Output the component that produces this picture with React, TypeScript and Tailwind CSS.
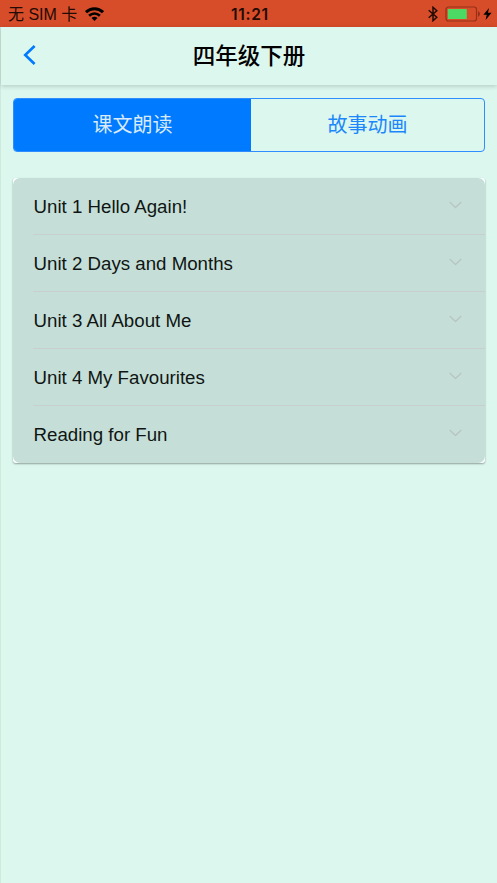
const units = [
  "Unit 1 Hello Again!",
  "Unit 2 Days and Months",
  "Unit 3 All About Me",
  "Unit 4 My Favourites",
  "Reading for Fun",
];

function StatusBar() {
  return (
    <div className="grid h-[27px] grid-cols-3 items-center bg-[#d84d29] pr-[5px] pl-[8px] text-[#220b05]">
      <div className="flex items-center">
        <span className="pt-px text-[16px] leading-[27px] whitespace-nowrap">无 SIM 卡</span>
        <svg className="ml-[8px] h-[14px] w-[19px] text-black" viewBox="0 0 19 14" fill="none">
          <path d="M1 5.2C5.8.6 13.2.6 18 5.2" stroke="currentColor" strokeWidth="3" />
          <path d="M4.1 8.7c3.1-3 7.7-3 10.8 0" stroke="currentColor" strokeWidth="2.6" />
          <path d="M6.5 10.9c1.7-1.6 4.3-1.6 6 0l-3 3z" fill="currentColor" />
        </svg>
      </div>
      <span className="pt-px text-center font-['Inter','Liberation_Sans',sans-serif] text-[15.5px] leading-[27px] font-semibold tracking-[0.7px]">
        11:21
      </span>
      <div className="flex items-center justify-end">
        <svg className="h-[16px] w-[10px]" viewBox="0 0 10 16" fill="none" stroke="currentColor" strokeWidth="1.5">
          <path d="M.7 4.2 8.8 11.3 5 14.7V1.3l3.8 3.4-8.1 7.1" />
        </svg>
        <svg className="ml-[7px] h-[16px] w-[36px]" viewBox="0 0 36 16" fill="none">
          <rect x="1" y="1" width="30.5" height="14" rx="2.5" stroke="#94301a" strokeWidth="1.2" />
          <rect x="2.8" y="3" width="19" height="10" rx="0.5" fill="#4cd964" />
          <path d="M33 5.3c2.6.9 2.6 4.5 0 5.4z" fill="#94301a" />
        </svg>
        <svg className="ml-[2px] h-[12px] w-[9px]" viewBox="0 0 9 12" fill="#000">
          <path d="M6 0 .4 6.8h3.3L2.6 12l6-7.2H5z" />
        </svg>
      </div>
    </div>
  );
}

export default function App() {
  return (
    <div className="flex min-h-screen flex-col border-l border-[#cfe9df] bg-[#dcf7ed] font-['Liberation_Sans','Noto_Sans_CJK_SC',sans-serif] text-[#101513]">
      <div className="-ml-px">
        <StatusBar />
      </div>

      {/* Title bar */}
      <header className="grid h-[58px] grid-cols-[60px_1fr_60px] items-center shadow-[0_1px_5px_rgba(0,0,0,0.2)]">
        <button aria-label="Back" className="pl-[22px] text-[#007aff]">
          <svg className="mb-[2px] h-[20px] w-[13px]" viewBox="0 0 13 20" fill="none" stroke="currentColor" strokeWidth="2.6">
            <path d="M11.6 1 2.2 10l9.4 9" />
          </svg>
        </button>
        <h1 className="pt-[2px] text-center text-[22.5px] leading-[56px] font-medium text-black">四年级下册</h1>
      </header>

      {/* Segmented control */}
      <div className="mx-[12px] mt-[13px] grid h-[54px] grid-cols-[237px_1fr] overflow-hidden rounded-[4px] border-[1.5px] border-[#2f8dff] text-[20px] leading-[51px]">
        <button className="bg-[#007aff] text-[#d9eafb]">课文朗读</button>
        <button className="text-[#1b87fb]">故事动画</button>
      </div>

      {/* Unit list */}
      <div className="mx-[12px] mt-[26px] rounded-[3px] bg-white shadow-[0_1px_2px_rgba(0,0,0,0.35)]">
        <ul className="rounded-[7px] bg-[#c5dfd8] pl-[20px]">
          {units.map((unit) => (
            <li
              key={unit}
              className="flex h-[57px] items-center justify-between border-b border-[#c8d0cd] pr-[23px] text-[18.7px] last:border-transparent"
            >
              <span className="pt-[3px] pl-[0.5px]">{unit}</span>
              <svg className="mb-[2px] h-[8px] w-[13px]" viewBox="0 0 13 8" fill="none" stroke="#b9c5c1" strokeWidth="1.4">
                <path d="m.7 1 5.8 5.6L12.3 1" />
              </svg>
            </li>
          ))}
        </ul>
      </div>
    </div>
  );
}
